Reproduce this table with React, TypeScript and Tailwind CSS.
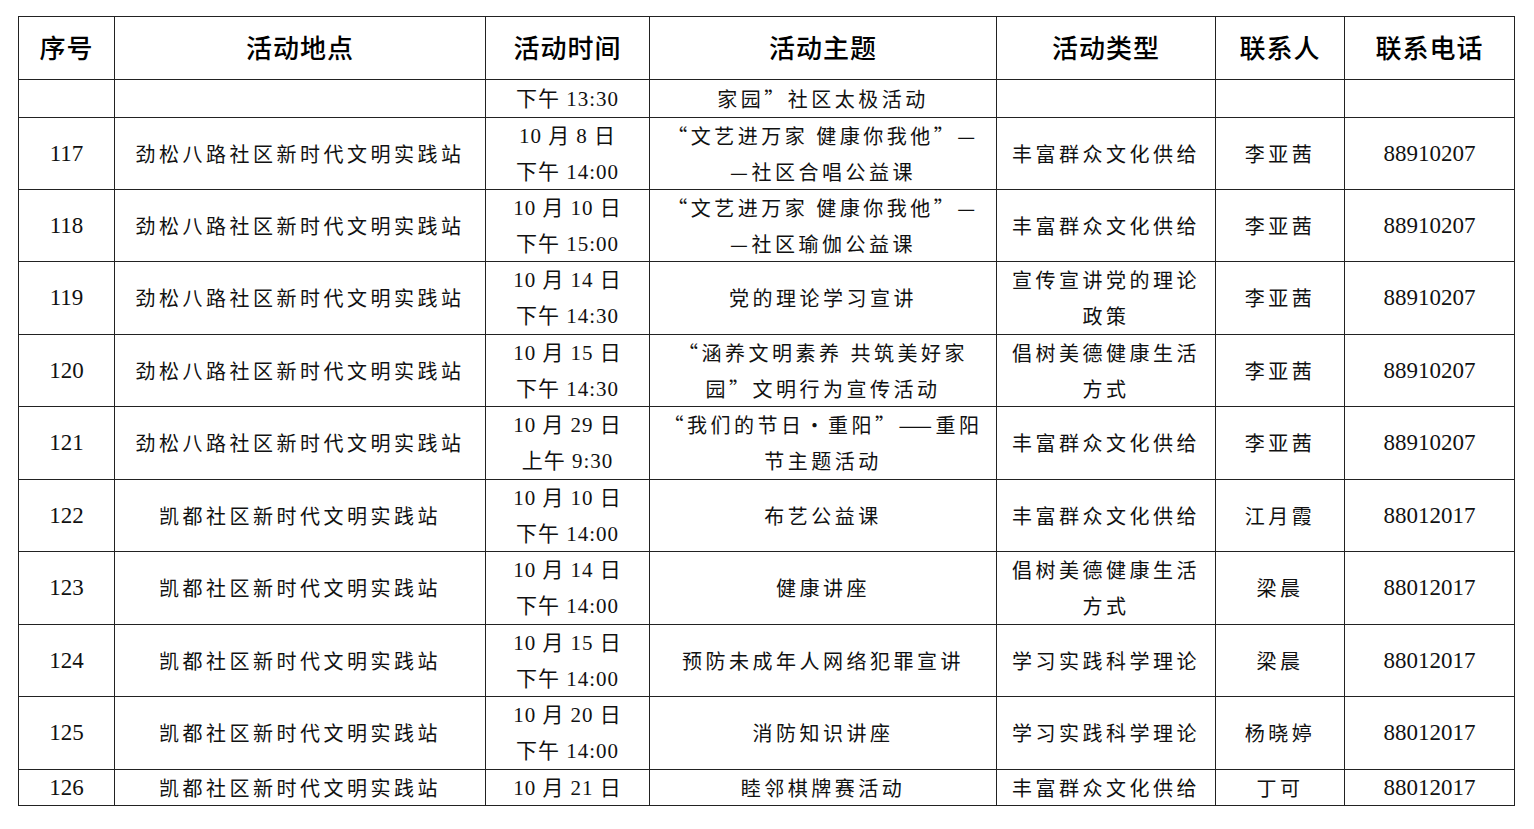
const cjk = "font-['Noto_Sans_CJK_SC',sans-serif] text-[20px] tracking-[3.5px]";
const num = "font-['Liberation_Serif','Noto_Sans_CJK_SC',serif] text-[23px]";
const time = "font-['Liberation_Serif','Noto_Sans_CJK_SC',serif] text-[21px] tracking-[1px]";

const headers = ["序号", "活动地点", "活动时间", "活动主题", "活动类型", "联系人", "联系电话"];
const widths = ["w-[96px]", "w-[371px]", "w-[164px]", "w-[347px]", "w-[219px]", "w-[129px]", "w-[170px]"];
const fonts = [num, cjk, time, cjk, cjk, cjk, num];

const JS = "劲松八路社区新时代文明实践站";
const KD = "凯都社区新时代文明实践站";

type Row = { h: string; cells: string[] };

const rows: Row[] = [
  { h: "h-[38px]", cells: ["", "", "下午 13:30", "家园”社区太极活动", "", "", ""] },
  { h: "h-[72px]", cells: ["117", JS, "10 月 8 日\n下午 14:00", "“文艺进万家 健康你我他”—\n—社区合唱公益课", "丰富群众文化供给", "李亚茜", "88910207"] },
  { h: "h-[72px]", cells: ["118", JS, "10 月 10 日\n下午 15:00", "“文艺进万家 健康你我他”—\n—社区瑜伽公益课", "丰富群众文化供给", "李亚茜", "88910207"] },
  { h: "h-[73px]", cells: ["119", JS, "10 月 14 日\n下午 14:30", "党的理论学习宣讲", "宣传宣讲党的理论\n政策", "李亚茜", "88910207"] },
  { h: "h-[72px]", cells: ["120", JS, "10 月 15 日\n下午 14:30", "“涵养文明素养 共筑美好家\n园”文明行为宣传活动", "倡树美德健康生活\n方式", "李亚茜", "88910207"] },
  { h: "h-[73px]", cells: ["121", JS, "10 月 29 日\n上午 9:30", "“我们的节日•重阳”——重阳\n节主题活动", "丰富群众文化供给", "李亚茜", "88910207"] },
  { h: "h-[72px]", cells: ["122", KD, "10 月 10 日\n下午 14:00", "布艺公益课", "丰富群众文化供给", "江月霞", "88012017"] },
  { h: "h-[73px]", cells: ["123", KD, "10 月 14 日\n下午 14:00", "健康讲座", "倡树美德健康生活\n方式", "梁晨", "88012017"] },
  { h: "h-[72px]", cells: ["124", KD, "10 月 15 日\n下午 14:00", "预防未成年人网络犯罪宣讲", "学习实践科学理论", "梁晨", "88012017"] },
  { h: "h-[73px]", cells: ["125", KD, "10 月 20 日\n下午 14:00", "消防知识讲座", "学习实践科学理论", "杨晓婷", "88012017"] },
  { h: "h-[36px]", cells: ["126", KD, "10 月 21 日", "睦邻棋牌赛活动", "丰富群众文化供给", "丁可", "88012017"] },
];

export default function App() {
  return (
    <div className="min-h-[829px] w-[1534px] bg-white pl-[18px] pt-[16px] text-[#111]">
      <table className="table-fixed border-collapse">
        <colgroup>
          {widths.map((w, i) => (
            <col key={i} className={w} />
          ))}
        </colgroup>
        <thead>
          <tr className="h-[63px]">
            {headers.map((h) => (
              <th
                key={h}
                className="border border-[#222] p-0 pb-[2px] text-center align-middle font-['Noto_Sans_CJK_SC',sans-serif] text-[26px] leading-[34px] font-medium tracking-[1px] text-black"
              >
                {h}
              </th>
            ))}
          </tr>
        </thead>
        <tbody>
          {rows.map((r, ri) => (
            <tr key={ri} className={r.h}>
              {r.cells.map((c, ci) => (
                <td
                  key={ci}
                  className={`border border-[#222] p-0 text-center align-middle leading-[34px] whitespace-nowrap ${fonts[ci]}`}
                >
                  {c.split("\n").map((line, li) => (
                    <div key={li} className={li > 0 ? "mt-[2px]" : ""}>
                      {line}
                    </div>
                  ))}
                </td>
              ))}
            </tr>
          ))}
        </tbody>
      </table>
    </div>
  );
}
